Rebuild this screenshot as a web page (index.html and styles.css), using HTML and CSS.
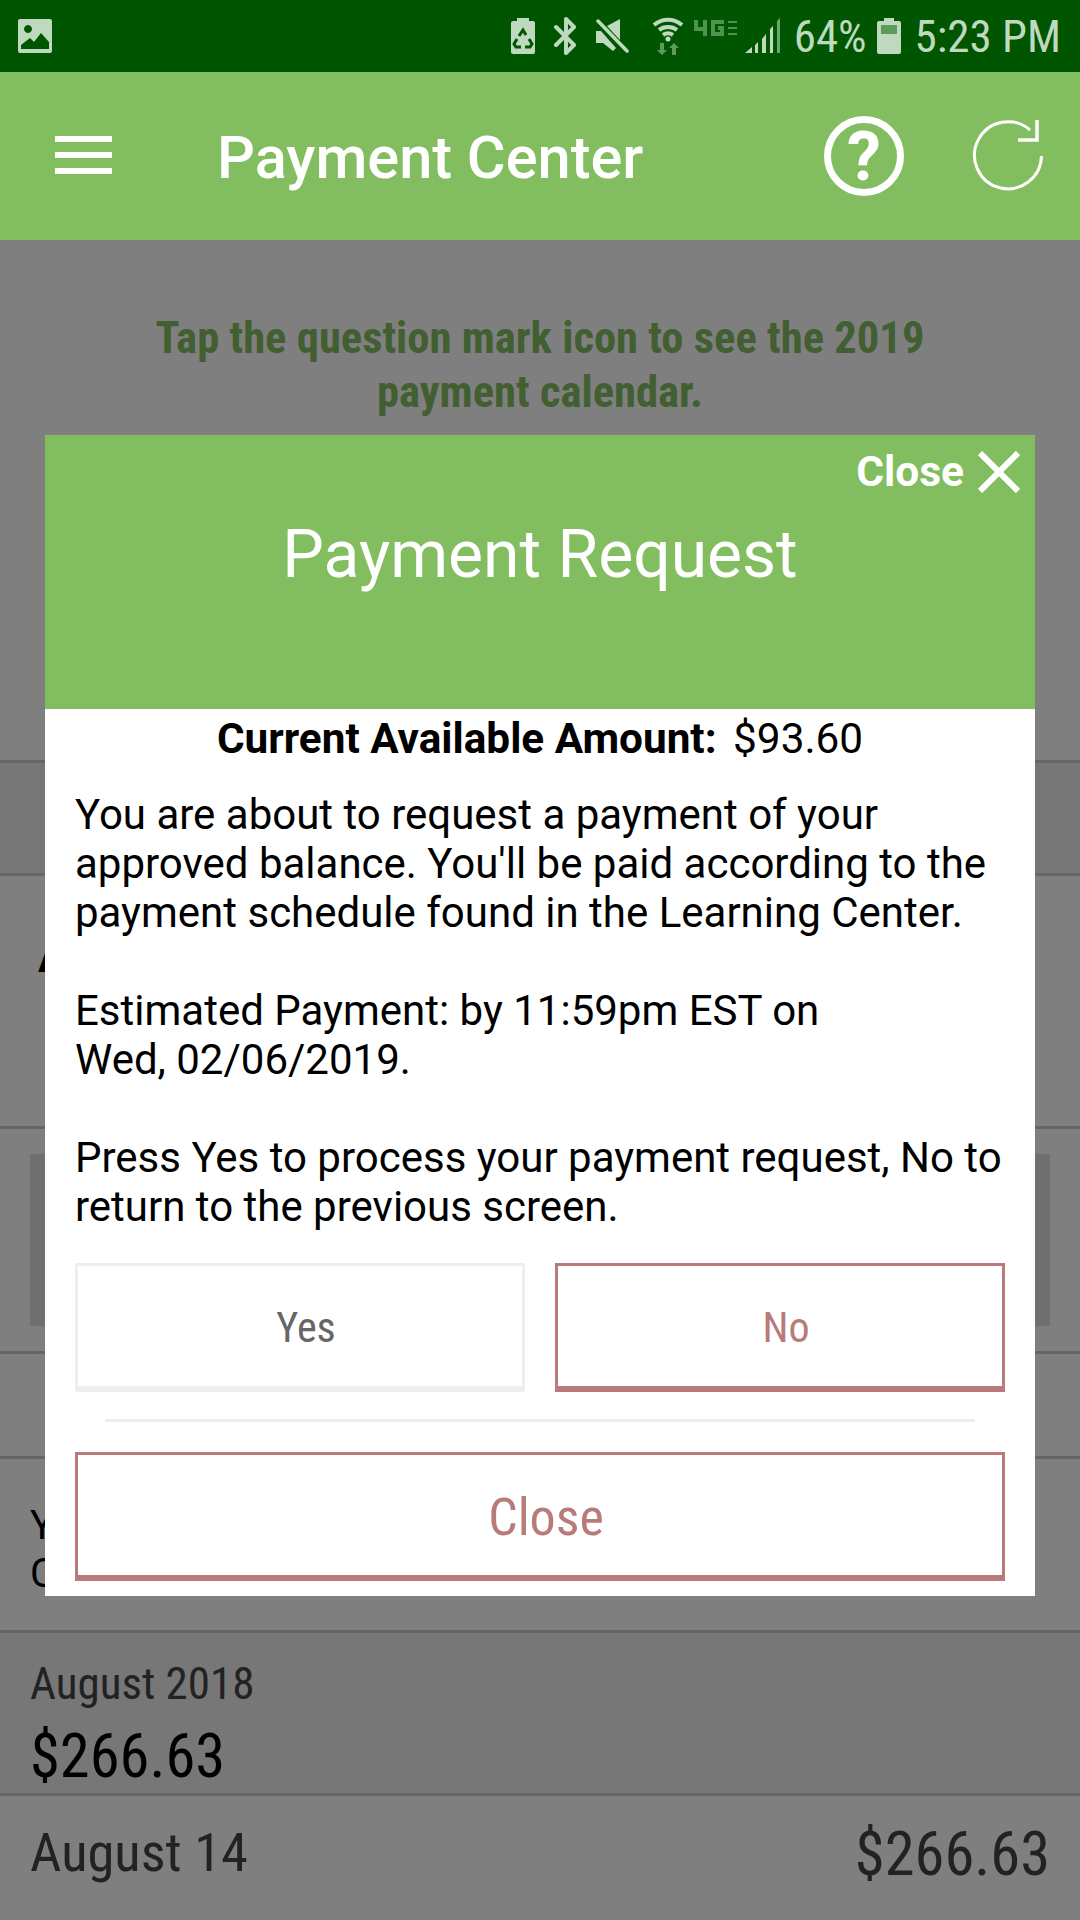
FILE: index.html
```html
<!DOCTYPE html>
<html lang="en">
<head>
  <meta charset="UTF-8">
  <title>Payment Center</title>
  <link rel="stylesheet" href="styles.css">
</head>
<body>
  <div class="status-bar">
    <svg class="st-icon" width="36" height="36" viewBox="0 0 36 36">
      <path fill="#bfd9bf" fill-rule="evenodd" d="M3 1h30a2 2 0 0 1 2 2v30a2 2 0 0 1-2 2H3a2 2 0 0 1-2-2V3a2 2 0 0 1 2-2zM4 27v4h28v-7l-8-9-7 9-4-4z M11 7a4 4 0 1 0 .01 0z"/>
    </svg>
    <div class="status-right">
      <svg class="st-batt" width="24" height="36" viewBox="0 0 24 36">
        <path fill="#bfd9bf" d="M6 0h12v3h4a2 2 0 0 1 2 2v29a2 2 0 0 1-2 2H2a2 2 0 0 1-2-2V5a2 2 0 0 1 2-2h4z"/>
        <path fill="none" stroke="#005500" stroke-width="3" d="M8 18l4-6 3 5M6 21l-3 5 2 3h5M14 29h5l2-3-3-5"/>
      </svg>
      <svg width="25" height="38" viewBox="0 0 25 38">
        <path fill="none" stroke="#bfd9bf" stroke-width="4" stroke-linecap="round" stroke-linejoin="round" d="M3 10l18 18-8 8V2l8 8L3 28"/>
      </svg>
      <svg class="st-mute" width="33" height="34" viewBox="0 0 33 34">
        <path fill="#bfd9bf" d="M0 12h5l15 17-3 3-10-8H0zM11 7l13-7v21z"/>
        <path stroke="#bfd9bf" stroke-width="3.5" stroke-linecap="round" d="M2 2l29 30"/>
      </svg>
      <svg class="st-wifi" width="32" height="38" viewBox="0 0 32 38">
        <path fill="none" stroke="#bfd9bf" stroke-width="4" d="M2 8c8-7 20-7 28 0M7 13c5-4 13-4 18 0M11 18c3-2 7-2 10 0"/>
        <circle cx="16" cy="22" r="2.5" fill="#bfd9bf"/>
        <path fill="#5d9a5d" d="M8 26h4v7h3l-5 5-5-5h3zM22 26l5 5h-3v7h-4v-7h-3z"/>
      </svg>
      <svg class="st-4g" width="43" height="16" viewBox="0 0 43 16">
        <path fill="none" stroke="#4f9350" stroke-width="4" d="M2 0v9h11M11 0v16M30 2H19v12h9V8h-4"/>
        <path fill="none" stroke="#4f9350" stroke-width="2" d="M34 2h9M34 8h9M34 14h9"/>
      </svg>
      <svg width="35" height="36" viewBox="0 0 35 36">
        <path fill="#bfd9bf" d="M0 35l7-6v6zM10 27l3-3v11h-3zM17 21l4-5v19h-4zM25 11l3-3v27h-3z"/>
        <path fill="#6da56d" d="M32 3l3-3v35h-3z"/>
      </svg>
      <span class="st-text st-pct">64%</span>
      <svg width="24" height="36" viewBox="0 0 24 36">
        <path fill="#bfd9bf" d="M7 0h10v3h5a2 2 0 0 1 2 2v29a2 2 0 0 1-2 2H2a2 2 0 0 1-2-2V5a2 2 0 0 1 2-2h5z"/>
        <rect x="4" y="7" width="16" height="9" fill="#5d9a5d"/>
      </svg>
      <span class="st-text st-time">5:23 PM</span>
    </div>
  </div>

  <header class="app-bar">
    <div class="hamburger"><span></span><span></span><span></span></div>
    <h1 class="app-title">Payment Center</h1>
    <svg class="help-icon" width="80" height="80" viewBox="0 0 80 80">
      <circle cx="40" cy="40" r="36.5" fill="none" stroke="#fff" stroke-width="7"/>
      <text x="40" y="64" text-anchor="middle" class="help-mark">?</text>
    </svg>
    <svg class="refresh-icon" width="72" height="74" viewBox="0 0 72 74">
      <path fill="none" stroke="#fff" stroke-width="3" d="M58 11A33.5 33.5 0 1 0 69.5 37"/>
      <path fill="none" stroke="#fff" stroke-width="3.5" d="M65 1v20H46"/>
    </svg>
  </header>

  <main class="page">
    <section class="notice">
      <p>Tap the question mark icon to see the 2019<br>payment calendar.</p>
    </section>
    <section class="row row-tabs"></section>
    <section class="row row-amount"><strong>A</strong></section>
    <section class="row row-box"><div class="grey-box"></div></section>
    <section class="row row-plain"></section>
    <section class="row row-note">Y<br>C</section>
    <section class="row row-month">
      <div class="month-name">August 2018</div>
      <div class="month-total">$266.63</div>
    </section>
    <section class="row row-pay">
      <span class="pay-date">August 14</span>
      <span class="pay-amount">$266.63</span>
    </section>

    <div class="scrim"></div>

    <div class="modal">
      <div class="modal-head">
        <div class="modal-close">
          <span>Close</span>
          <svg width="42" height="42" viewBox="0 0 42 42">
            <path stroke="#fff" stroke-width="6" d="M2 2l38 38M40 2L2 40"/>
          </svg>
        </div>
        <h2 class="modal-title">Payment Request</h2>
      </div>
      <div class="modal-body">
        <p class="available"><b>Current Available Amount:</b> <span>$93.60</span></p>
        <p class="copy">You are about to request a payment of your<br>approved balance. You'll be paid according to the<br>payment schedule found in the Learning Center.</p>
        <p class="copy">Estimated Payment: by 11:59pm EST on<br>Wed, 02/06/2019.</p>
        <p class="copy">Press Yes to process your payment request, No to<br>return to the previous screen.</p>
        <div class="btn-row">
          <button class="btn btn-yes">Yes</button>
          <button class="btn btn-no">No</button>
        </div>
        <hr class="divider">
        <button class="btn btn-no btn-close">Close</button>
      </div>
    </div>
  </main>
</body>
</html>
```

FILE: styles.css
```css
* { box-sizing: border-box; }
html, body { margin: 0; padding: 0; }
body { width: 1080px; height: 1920px; overflow: hidden; font-family: Roboto, "Liberation Sans", sans-serif; background: #fff; color: #000; }
p, h1, h2 { margin: 0; font-weight: normal; }

/* status bar */
.status-bar { height: 72px; background: #005500; display: flex; align-items: center; justify-content: space-between; padding: 0 19px 0 17px; }
.status-right { display: flex; align-items: center; }
.status-right svg { display: block; flex: none; margin-right: 18px; }
.status-right .st-mute { margin-right: 23px; }
.status-right .st-4g { margin: 0 8px 16px -8px; }
.st-text { color: #bfd9bf; font-size: 45px; display: inline-block; font-stretch: condensed; white-space: nowrap; }
.st-pct { margin: 0 10px 0 -4px; }
.st-time { margin-left: -4px; }

/* app bar */
.app-bar { height: 168px; background: #82be60; display: flex; align-items: center; color: #fff; }
.hamburger { width: 57px; margin-left: 55px; display: flex; flex-direction: column; gap: 10px; margin-top: -2px; }
.hamburger span { height: 6px; background: #fff; }
.app-title { font-size: 59.5px; font-weight: 500; margin-left: 105px; flex: 1; margin-top: 4px; }
.help-icon { margin-right: 68px; }
.help-mark { font-size: 68px; font-weight: 700; fill: #fff; font-family: Roboto, sans-serif; }
.refresh-icon { margin-right: 36px; }

/* page under the dialog */
.page { position: relative; height: 1680px; }
.notice { height: 523px; padding-top: 71px; text-align: center; border-bottom: 3px solid #ccc; }
.notice p { color: #82be60; font-size: 44.6px; font-weight: 700; line-height: 54px; font-stretch: condensed; }
.row { border-bottom: 3px solid #ccc; padding: 0 30px; }
.row-tabs { height: 113px; background: #eee; }
.row-amount { height: 253px; padding: 55px 0 0 38px; font-size: 44px; }
.row-box { height: 225px; padding: 25px 30px 0; }
.grey-box { height: 172px; background: #e0e0e0; }
.row-plain { height: 105px; }
.row-note { height: 174px; padding-top: 43px; font-size: 40px; line-height: 48px; }
.row-month { height: 163px; background: #eee; padding-top: 24px; }
.month-name { font-size: 45px; color: #444; font-stretch: condensed; }
.month-total { font-size: 60.5px; margin-top: 11px; font-stretch: condensed; }
.row-pay { display: flex; justify-content: space-between; align-items: center; height: 125px; border-bottom: 0; padding-bottom: 14px; color: #444; }
.pay-date { font-size: 54.5px; font-stretch: condensed; }
.pay-amount { font-size: 60.5px; font-stretch: condensed; margin-top: 6px; }

.scrim { position: absolute; inset: 0; background: rgba(0, 0, 0, .5); }

/* dialog */
.modal { position: absolute; left: 45px; top: 195px; width: 990px; height: 1161px; background: #fff; }
.modal-head { height: 274px; background: #82be60; color: #fff; position: relative; padding-top: 86px; }
.modal-close { position: absolute; right: 15px; top: 12px; display: flex; align-items: center; gap: 14px; font-size: 42.5px; font-weight: 700; }
.modal-title { text-align: center; font-size: 66px; line-height: 68px; }
.modal-body { padding: 0 30px; }
.available { text-align: center; font-size: 42.3px; line-height: 60px; }
.available span { margin-left: 6px; }
.copy { font-size: 42px; line-height: 49px; margin-bottom: 49px; }
.available + .copy { margin-top: 21px; }
.btn-row { display: flex; gap: 30px; margin-top: -17px; }
.btn { display: block; height: 129px; padding: 2px 0 0 12px; background: #fff; border: 3px solid #eee; border-bottom-width: 6px; font-family: inherit; font-size: 42px; font-stretch: condensed; color: #666; flex: 1; }
.btn-no { border-color: #b97a7a; color: #b97a7a; }
.divider { margin: 27px 30px 30px; border: 0; height: 3px; background: #eee; }
.btn-close { width: 100%; font-size: 52px; padding-top: 5px; }
```
